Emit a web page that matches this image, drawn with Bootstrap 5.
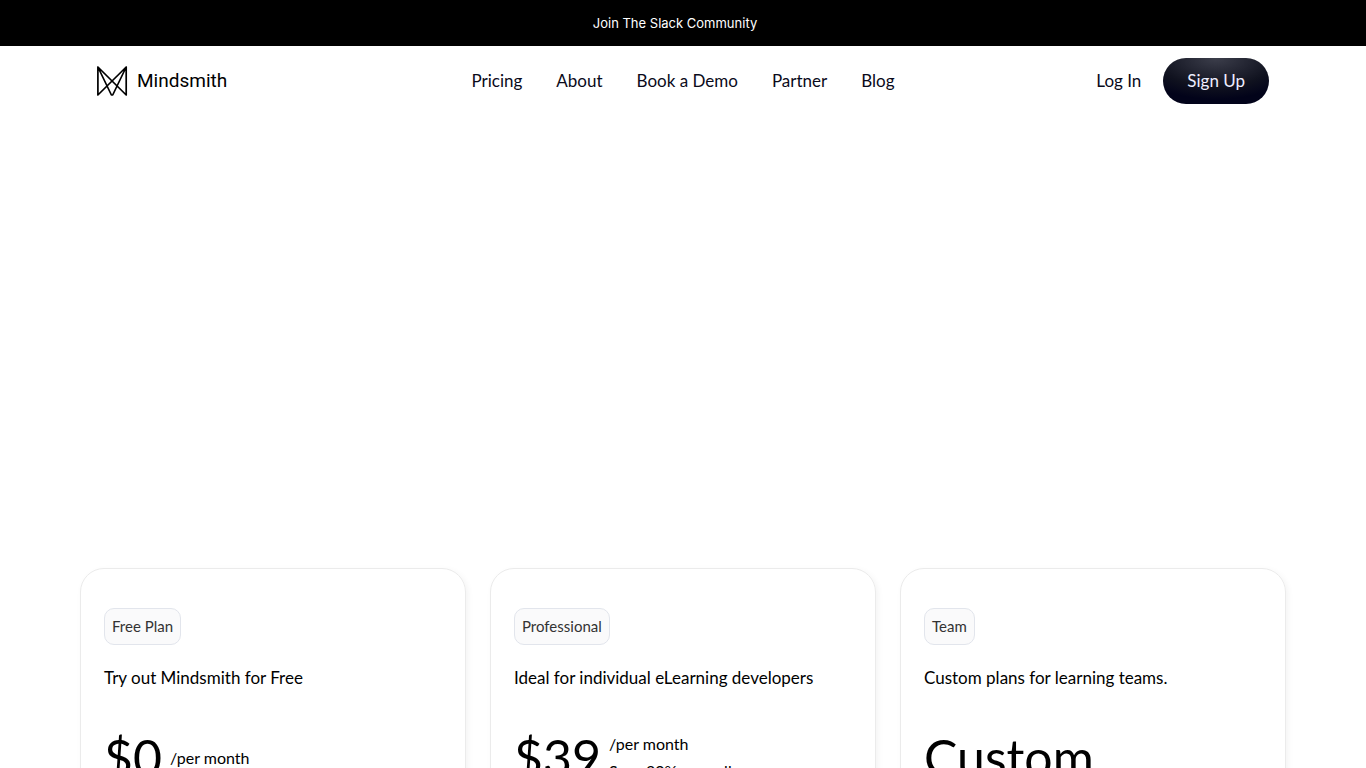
<!DOCTYPE html>
<html lang="en">
<head>
<meta charset="utf-8">
<meta name="viewport" content="width=device-width, initial-scale=1">
<title>Mindsmith Pricing</title>
<link href="https://cdn.jsdelivr.net/npm/bootstrap@5.3.0/dist/css/bootstrap.min.css" rel="stylesheet">
<style>
  body { font-family: Lato, "Open Sans", sans-serif; font-size: 17px; line-height: 26px; color: #000; background: #fff; overflow-x: hidden; }
  .announce { font-family: Inter, sans-serif; font-size: 13px; line-height: 22px; }
  .site-nav { padding: 12px 97px; }
  .site-nav a { color: #0a0a1a; text-decoration: none; }
  .site-nav .brand-word { font-family: Roboto, sans-serif; font-size: 19px; line-height: 24px; color: #000; }
  .side { flex: 1 1 0; }
  .menu { gap: 34px; }
  .actions { gap: 22px; }
  .btn-signup { color: #eef; font-size: 17px; line-height: 26px; padding: 10px 24px; border: 0; border-radius: 23px; background: radial-gradient(ellipse 80% 90% at 50% 0, #3c3e4b, #10121f 70%, #02031a); }
  .hero { min-height: 452px; }
  .plans { padding: 0 80px; }
  .plan { border: 1px solid #ebebeb; border-radius: 24px; padding: 39px 23px; box-shadow: 2px 2px 6px rgba(0,0,0,.05); }
  .plan-tag { font-size: 15px; line-height: 21px; color: #333; background: #fafafb; border: 1px solid #e2e5ec; border-radius: 10px; padding: 7px; font-weight: 400; }
  .plan-note { margin: 20px 0 36px; }
  .price { font-size: 50px; line-height: 60px; font-weight: 400; }
  .price-term { font-size: 16px; line-height: 27px; }
</style>
</head>
<body>
<div class="announce bg-black text-center py-2 px-3">
  <a class="text-white text-decoration-none d-block py-1 pe-3" href="#">Join The Slack Community</a>
</div>
<header>
  <nav class="site-nav d-flex align-items-center" aria-label="Main">
    <div class="side d-flex">
      <a class="d-flex align-items-center gap-2" href="#">
        <svg width="32" height="32" viewBox="0 0 32 32" fill="none" stroke="#000" stroke-width="1.7" stroke-linejoin="round" aria-hidden="true">
          <path d="M.9 2V30L29.2 2V30L.9 2L14.4 30H15.7L29.2 2"/>
        </svg>
        <span class="brand-word">Mindsmith</span>
      </a>
    </div>
    <div class="menu d-flex">
      <a href="#plans">Pricing</a><a href="#">About</a><a href="#">Book a Demo</a><a href="#">Partner</a><a href="#">Blog</a>
    </div>
    <div class="side actions d-flex justify-content-end align-items-center">
      <a href="#">Log In</a>
      <button type="button" class="btn-signup">Sign Up</button>
    </div>
  </nav>
</header>
<main>
  <section class="hero"></section>
  <section class="plans" id="plans">
    <div class="row g-4">
      <div class="col-4"><article class="plan h-100">
        <h2 class="plan-tag d-inline-block mb-0">Free Plan</h2>
        <p class="plan-note">Try out Mindsmith for Free</p>
        <div class="d-flex align-items-center gap-2"><span class="price">$0</span><span class="price-term">/per month</span></div>
      </article></div>
      <div class="col-4"><article class="plan h-100">
        <h2 class="plan-tag d-inline-block mb-0">Professional</h2>
        <p class="plan-note">Ideal for individual eLearning developers</p>
        <div class="d-flex align-items-center gap-2"><span class="price">$39</span><span class="price-term">/per month<br>Save 20% annually</span></div>
      </article></div>
      <div class="col-4"><article class="plan h-100">
        <h2 class="plan-tag d-inline-block mb-0">Team</h2>
        <p class="plan-note">Custom plans for learning teams.</p>
        <div class="price">Custom</div>
      </article></div>
    </div>
  </section>
</main>
<script src="https://cdn.jsdelivr.net/npm/bootstrap@5.3.0/dist/js/bootstrap.bundle.min.js"></script>
</body>
</html>
